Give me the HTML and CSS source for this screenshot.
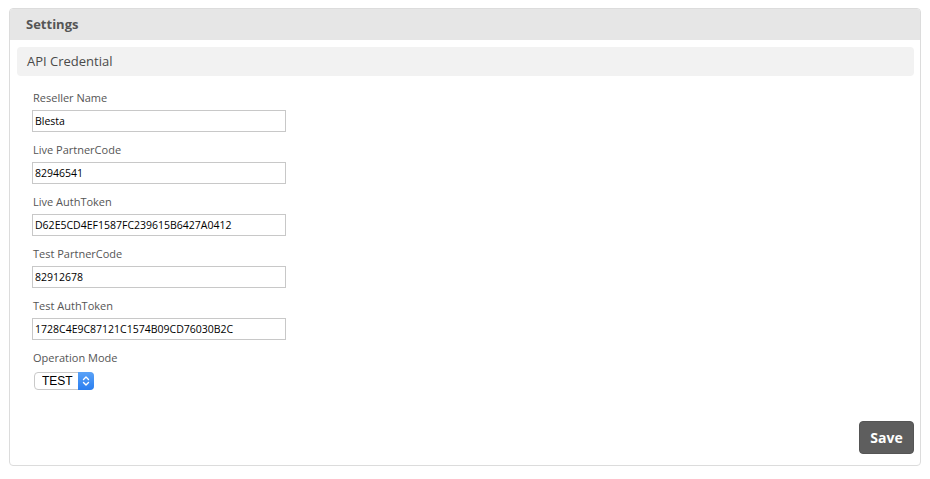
FILE: index.html
```html
<!DOCTYPE html>
<html>
<head>
<meta charset="utf-8">
<link rel="stylesheet" href="styles.css">
</head>
<body>
<div class="panel">
  <div class="panel-head">Settings</div>
  <div class="panel-body">
    <div class="section-title">API Credential</div>
    <form class="form">
      <div class="field">
        <label class="label">Reseller Name</label>
        <input class="input" type="text" value="Blesta">
      </div>
      <div class="field">
        <label class="label">Live PartnerCode</label>
        <input class="input" type="text" value="82946541">
      </div>
      <div class="field">
        <label class="label">Live AuthToken</label>
        <input class="input" type="text" value="D62E5CD4EF1587FC239615B6427A0412">
      </div>
      <div class="field">
        <label class="label">Test PartnerCode</label>
        <input class="input" type="text" value="82912678">
      </div>
      <div class="field">
        <label class="label">Test AuthToken</label>
        <input class="input" type="text" value="1728C4E9C87121C1574B09CD76030B2C">
      </div>
      <div class="field field-select">
        <label class="label">Operation Mode</label>
        <div class="select-wrap">
          <select class="select"><option>TEST</option><option>LIVE</option></select>
          <span class="select-arrow">
            <svg width="10" height="12" viewBox="0 0 10 12"><path d="M2.5 4.5 L5 2 L7.5 4.5 M2.5 7.5 L5 10 L7.5 7.5" fill="none" stroke="#fff" stroke-width="1.4" stroke-linecap="round" stroke-linejoin="round"/></svg>
          </span>
        </div>
      </div>
    </form>
    <div class="actions">
      <button class="btn" type="button">Save</button>
    </div>
  </div>
</div>
</body>
</html>
```
FILE: styles.css
```css
html, body { background: #fff; }
body {
  margin: 8px 9px 0 9px;
  font-family: "Open Sans", "Noto Sans", sans-serif;
}
.panel {
  border: 1px solid #dcdcdc;
  border-radius: 4px;
  overflow: hidden;
}
.panel-head {
  height: 31px;
  background: #e6e6e6;
  padding-left: 16px;
  font-size: 13px;
  font-weight: 700;
  color: #555;
  line-height: 31px;
}
.panel-body {
  padding: 7px 6px 11px 7px;
}
.section-title {
  height: 29px;
  line-height: 29px;
  background: #f2f2f2;
  border-radius: 4px;
  padding-left: 10px;
  font-size: 13px;
  color: #4a4a4a;
}
.form {
  padding: 14px 0 0 15px;
  display: flex;
  flex-direction: column;
  gap: 10px;
}
.field {
  display: flex;
  flex-direction: column;
  align-items: flex-start;
  gap: 4px;
}
.field-select { gap: 6px; }
.label {
  display: block;
  height: 16px;
  line-height: 16px;
  font-size: 11px;
  color: #555;
  padding-left: 1px;
}
.input {
  box-sizing: border-box;
  width: 254px;
  height: 22px;
  margin: 0;
  border: 1px solid #c8c8c8;
  border-radius: 0;
  padding: 0 2px;
  font-family: "Open Sans", "Noto Sans", sans-serif;
  font-size: 10.5px;
  color: #000;
  outline: none;
}
.select-wrap {
  position: relative;
  margin-left: 2px;
  width: 60px;
  height: 18px;
}
.select {
  display: block;
  -webkit-appearance: none;
  appearance: none;
  box-sizing: border-box;
  width: 60px;
  height: 18px;
  margin: 0;
  border: 1px solid #c9c9c9;
  border-radius: 4px;
  background: #fff;
  padding: 0 0 0 7px;
  font-family: "Liberation Sans", Arial, sans-serif;
  font-size: 12px;
  color: #000;
  line-height: 16px;
}
.select-arrow {
  position: absolute;
  top: 0;
  right: 0;
  width: 16px;
  height: 18px;
  border-radius: 0 4px 4px 0;
  background: linear-gradient(#5aa2f7, #2a7ef0);
  display: flex;
  align-items: center;
  justify-content: center;
  pointer-events: none;
}
.actions {
  display: flex;
  justify-content: flex-end;
  margin-top: 31px;
}
.btn {
  width: 55px;
  height: 33px;
  border: 1px solid #555;
  border-radius: 4px;
  background: #5e5e5e;
  color: #fff;
  font-family: "Open Sans", "Noto Sans", sans-serif;
  font-size: 14px;
  font-weight: 700;
  padding: 0;
}
```
